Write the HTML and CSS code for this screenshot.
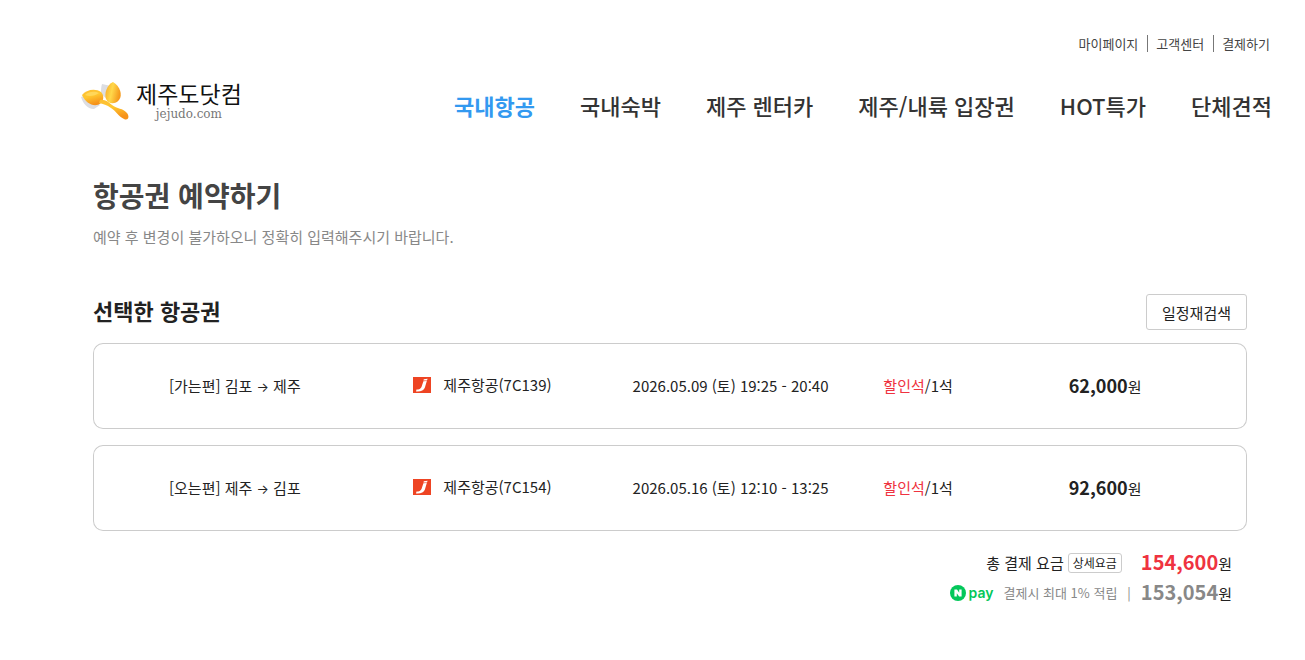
FILE: index.html
```html
<!DOCTYPE html>
<html lang="ko">
<head>
<meta charset="UTF-8">
<meta name="viewport" content="width=device-width, initial-scale=1.0">
<title>제주도닷컴</title>
<link rel="stylesheet" href="styles.css">
</head>
<body>
<header class="header">
  <ul class="util">
    <li><a href="#">마이페이지</a></li>
    <li><a href="#">고객센터</a></li>
    <li><a href="#">결제하기</a></li>
  </ul>
  <div class="header-main">
    <a class="logo" href="#">
      <svg class="logo-mark" viewBox="0 0 48 38" aria-hidden="true">
        <defs>
          <linearGradient id="petal" x1="0" y1="0" x2="0.4" y2="1">
            <stop offset="0" stop-color="#fcbf35"/>
            <stop offset="0.5" stop-color="#ffc62f"/>
            <stop offset="1" stop-color="#f6921a"/>
          </linearGradient>
          <linearGradient id="petal2" x1="0" y1="0" x2="1" y2="0.3">
            <stop offset="0" stop-color="#f9a825"/>
            <stop offset="0.5" stop-color="#ffd84a"/>
            <stop offset="1" stop-color="#f59a1c"/>
          </linearGradient>
        </defs>
        <path fill="#dcdde2" d="M0 15C2 21 6 27 13 27L19 23L6 13ZM21 2L30 4L27 18L20 12C20 8 20 5 21 2Z"/>
        <path fill="url(#petal)" d="M1 13C5 8 14 6 20 10C23 13 23 18 20 21C14 26 5 22 1 13Z"/>
        <path fill="#ffd75a" d="M4 13C8 9 14 9 18 11C14 14 8 15 4 13Z"/>
        <path fill="url(#petal2)" d="M32 0C39 4 42 13 38 18C34 23 27 22 25 17C23 11 26 3 32 0Z"/>
        <path fill="url(#petal)" d="M19 18C24 17 27 20 31 23C36 27 42 26 46 31C49 35 47 39 43 37C37 34 35 29 30 26C26 23 22 22 18 21Z"/>
      </svg>
      <span class="logo-text">
        <span class="logo-name">제주도닷컴</span>
        <span class="logo-domain">jejudo.com</span>
      </span>
    </a>
    <nav class="nav">
      <a class="active" href="#">국내항공</a>
      <a href="#">국내숙박</a>
      <a href="#">제주 렌터카</a>
      <a href="#">제주/내륙 입장권</a>
      <a href="#">HOT특가</a>
      <a href="#">단체견적</a>
    </nav>
  </div>
</header>

<main class="content">
  <h1 class="page-title">항공권 예약하기</h1>
  <p class="page-desc">예약 후 변경이 불가하오니 정확히 입력해주시기 바랍니다.</p>

  <div class="section-head">
    <h2 class="section-title">선택한 항공권</h2>
    <button type="button" class="btn-search">일정재검색</button>
  </div>

  <table class="flights">
    <colgroup>
      <col class="col-route">
      <col class="col-airline">
      <col class="col-time">
      <col class="col-seat">
      <col class="col-price">
    </colgroup>
    <tbody>
      <tr>
        <td>[가는편] 김포 <span class="arrow">→</span> 제주</td>
        <td>
          <span class="airline">
            <svg class="airline-logo" viewBox="0 0 18 16" aria-hidden="true">
              <path fill="#ee4423" d="M0 0H18V16H0Z"/>
              <path fill="#fff" d="M10.8 2.2L14.6 1.8L14 3.4L10.4 3.5ZM10.4 4.2L13.8 4L11.9 10.5C10.9 13.6 7.5 14.8 3 14.4L3.5 12.6C6.1 12.5 7.8 11.7 8.5 10Z"/>
            </svg>
            제주항공(7C139)
          </span>
        </td>
        <td>2026.05.09 (토) 19:25 - 20:40</td>
        <td><span class="discount">할인석</span>/1석</td>
        <td><strong class="price">62,000</strong>원</td>
      </tr>
      <tr>
        <td>[오는편] 제주 <span class="arrow">→</span> 김포</td>
        <td>
          <span class="airline">
            <svg class="airline-logo" viewBox="0 0 18 16" aria-hidden="true">
              <path fill="#ee4423" d="M0 0H18V16H0Z"/>
              <path fill="#fff" d="M10.8 2.2L14.6 1.8L14 3.4L10.4 3.5ZM10.4 4.2L13.8 4L11.9 10.5C10.9 13.6 7.5 14.8 3 14.4L3.5 12.6C6.1 12.5 7.8 11.7 8.5 10Z"/>
            </svg>
            제주항공(7C154)
          </span>
        </td>
        <td>2026.05.16 (토) 12:10 - 13:25</td>
        <td><span class="discount">할인석</span>/1석</td>
        <td><strong class="price">92,600</strong>원</td>
      </tr>
    </tbody>
  </table>

  <div class="total">
    <div class="total-row">
      <span>총 결제 요금</span>
      <button type="button" class="btn-detail">상세요금</button>
      <span class="amount"><strong class="total-price">154,600</strong>원</span>
    </div>
    <div class="total-row">
      <span class="npay">
        <svg class="npay-mark" viewBox="0 0 16 16" aria-hidden="true">
          <circle cx="8" cy="8" r="8" fill="#03c75a"/>
          <path fill="#fff" d="M4.4 4.5H7L9.2 7.8V4.5H11.6V11.5H9.1L6.8 8.2V11.5H4.4Z"/>
        </svg>
        pay
      </span>
      <span class="npay-desc">결제시 최대 1% 적립</span>
      <span class="bar">|</span>
      <span class="amount"><strong class="pay-price">153,054</strong>원</span>
    </div>
  </div>
</main>
</body>
</html>
```
FILE: styles.css
```css
* {
  box-sizing: border-box;
}
body {
  margin: 0;
  background-color: #fff;
  font-family: "Noto Sans CJK KR", sans-serif;
  font-size: 15px;
  line-height: 22px;
  color: #222;
}
a {
  color: inherit;
  text-decoration: none;
}
button {
  font-family: inherit;
  color: #222;
  background-color: #fff;
  border: 1px solid #ccc;
  cursor: pointer;
}

/* header */
.header {
  padding: 35px 33px 0 81px;
}
.util {
  display: flex;
  justify-content: flex-end;
  margin: 0;
  padding: 0 2px 0 0;
  list-style: none;
  font-size: 13px;
  line-height: 17px;
  color: #444;
}
.util li + li {
  margin-left: 9px;
  padding-left: 8px;
  border-left: 1px solid #777;
}
.header-main {
  display: flex;
  justify-content: space-between;
  margin-top: 28px;
}
.logo {
  display: flex;
  gap: 7px;
}
.logo-mark {
  width: 48px;
  height: 38px;
  margin-top: 2px;
}
.logo-text {
  display: flex;
  flex-direction: column;
  align-items: center;
}
.logo-name {
  font-size: 23px;
  font-weight: 400;
  line-height: 26px;
  color: #111;
}
.logo-domain {
  font-family: "DejaVu Serif", serif;
  font-size: 12px;
  line-height: 16px;
  color: #777;
}
.nav {
  display: flex;
  gap: 45px;
  padding-top: 9px;
  font-size: 22px;
  font-weight: 500;
  line-height: 32px;
  color: #333;
}
.nav .active {
  font-weight: 700;
  color: #3399f0;
}

/* content */
.content {
  padding: 53px 58px 50px 93px;
}
.page-title {
  margin: 0;
  font-size: 28px;
  line-height: 40px;
  color: #444;
}
.page-desc {
  margin: 11px 0 0;
  color: #888;
}
.section-head {
  display: flex;
  justify-content: space-between;
  align-items: flex-start;
  margin-top: 46px;
}
.section-title {
  margin: 0;
  font-size: 22px;
  line-height: 32px;
}
.btn-search {
  height: 36px;
  padding: 0 15px;
  border-radius: 3px;
  font-size: 15px;
}

/* flights, each row is a rounded box */
.flights {
  width: 100%;
  margin: -3px 0 0;
  table-layout: fixed;
  border-collapse: separate;
  border-spacing: 0 16px;
}
.col-route,
.col-time,
.col-price {
  width: 24.5%;
}
.col-airline {
  width: 18.5%;
}
.col-seat {
  width: 8%;
}
.flights td {
  height: 86px;
  padding: 0;
  border: solid #ccc;
  border-width: 1px 0;
  text-align: center;
  white-space: nowrap;
}
.flights td:first-child {
  border-left-width: 1px;
  border-radius: 10px 0 0 10px;
}
.flights td:last-child {
  border-right-width: 1px;
  border-radius: 0 10px 10px 0;
}
.arrow {
  font-family: Inter, sans-serif;
  font-size: 13px;
}
.airline {
  display: inline-flex;
  align-items: center;
  gap: 12px;
}
.airline-logo {
  width: 18px;
  height: 16px;
}
.discount {
  color: #ef3340;
}
.price {
  font-size: 18px;
}

/* total */
.total {
  padding: 1px 15px 0 0;
}
.total-row {
  display: flex;
  justify-content: flex-end;
  align-items: center;
  height: 30px;
}
.btn-detail {
  height: 20px;
  margin-left: 4px;
  padding: 0 4px;
  border-radius: 3px;
  font-size: 12px;
  line-height: 16px;
}
.amount {
  margin-left: 19px;
}
.total-price,
.pay-price {
  font-size: 20px;
}
.total-price {
  color: #ef3340;
}
.pay-price {
  color: #888;
}
.npay {
  display: flex;
  align-items: center;
  gap: 3px;
  font-family: Inter, sans-serif;
  font-size: 14px;
  font-weight: 600;
  color: #03c75a;
}
.npay-mark {
  width: 16px;
  height: 16px;
}
.npay-desc {
  margin-left: 10px;
  font-size: 13px;
  color: #888;
}
.bar {
  margin-left: 10px;
  font-size: 13px;
  color: #888;
}
.bar + .amount {
  margin-left: 10px;
}
```
